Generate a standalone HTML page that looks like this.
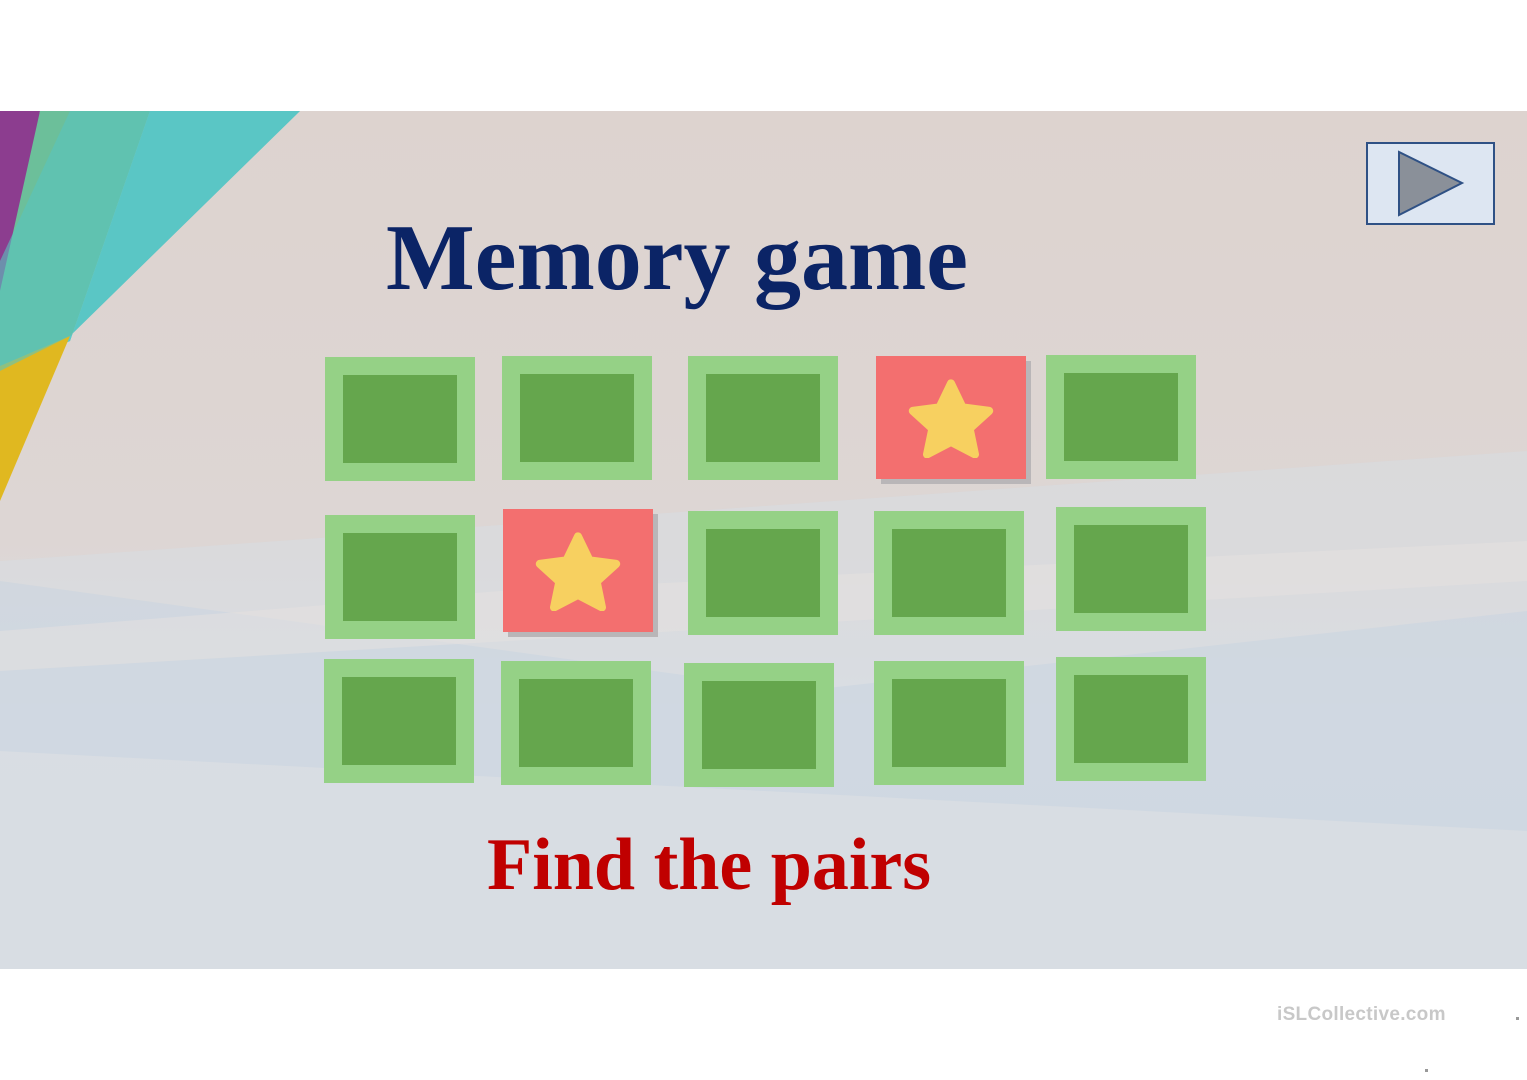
<!DOCTYPE html>
<html><head><style>
body{margin:0;width:1527px;height:1080px;background:#fff;position:relative;overflow:hidden;font-family:"Liberation Serif",serif}
.slide{position:absolute;left:0;top:111px;width:1527px;height:858px;overflow:hidden;background:linear-gradient(180deg,#ddd3cf 0%,#ddd6d4 50%,#dadde2 70%,#d8dde3 100%)}
.c{position:absolute;width:114px;height:88px;border:18px solid #95d186;background:#65a64d}
.r{position:absolute;width:150px;height:123px;background:#f36f6f;box-shadow:5px 5px 0 #b9b6b8}
.r svg{position:absolute;left:30px;top:22px}
</style></head><body>
<div class="slide">
<svg width="1527" height="858" style="position:absolute;left:0;top:0">
<polygon points="0,0 40,0 0,260" fill="#8c3d8f"/>
<polygon points="40,0 150,0 70,230 0,260 0,180" fill="#6cbf9a"/>
<polygon points="150,0 300,0 70,225 0,255 0,260 70,230" fill="#5cc8cc"/>
<polygon points="0,255 70,225 0,390" fill="#e0b820"/>
<polygon points="0,150 70,0 300,0 70,225 0,260" fill="#58c4bf" opacity="0.6"/>
<polygon points="0,450 1527,340 1527,858 0,858" fill="#d8dde3" opacity="0.5"/>
<polygon points="0,470 800,580 1527,500 1527,720 0,640" fill="#c3d2e2" opacity="0.4"/>
<polygon points="0,520 500,480 1527,430 1527,470 0,560" fill="#e6e2e0" opacity="0.5"/>
</svg>
<svg width="130" height="84" style="position:absolute;left:1366px;top:31px"><rect x="1" y="1" width="127" height="81" fill="#dde6f2" stroke="#2f5185" stroke-width="2"/><polygon points="33,10 33,73 96,41" fill="#8a9099" stroke="#2f5185" stroke-width="2"/></svg>
</div>
<div style="position:absolute;left:386px;top:204px;font-size:94px;font-weight:bold;color:#0b2466;white-space:nowrap">Memory game</div>
<div style="position:absolute;left:487px;top:823px;font-size:74px;font-weight:bold;color:#c00000;white-space:nowrap">Find the pairs</div>
<div class="c" style="left:325px;top:357px"></div>
<div class="c" style="left:502px;top:356px"></div>
<div class="c" style="left:688px;top:356px"></div>
<div class="r" style="left:876px;top:356px"><svg width="90" height="80" viewBox="0 0 100 90"><polygon points="50,6 63,33 93,37 71,57 77,86 50,72 23,86 29,57 7,37 37,33" fill="#f7d060" stroke="#f7d060" stroke-width="9" stroke-linejoin="round"/></svg></div>
<div class="c" style="left:1046px;top:355px"></div>
<div class="c" style="left:325px;top:515px"></div>
<div class="r" style="left:503px;top:509px"><svg width="90" height="80" viewBox="0 0 100 90"><polygon points="50,6 63,33 93,37 71,57 77,86 50,72 23,86 29,57 7,37 37,33" fill="#f7d060" stroke="#f7d060" stroke-width="9" stroke-linejoin="round"/></svg></div>
<div class="c" style="left:688px;top:511px"></div>
<div class="c" style="left:874px;top:511px"></div>
<div class="c" style="left:1056px;top:507px"></div>
<div class="c" style="left:324px;top:659px"></div>
<div class="c" style="left:501px;top:661px"></div>
<div class="c" style="left:684px;top:663px"></div>
<div class="c" style="left:874px;top:661px"></div>
<div class="c" style="left:1056px;top:657px"></div>
<div style="position:absolute;left:1277px;top:1004px;font-family:'Liberation Sans',sans-serif;font-weight:bold;font-size:19px;letter-spacing:0.3px;color:#c8c8c8">iSLCollective.com</div>
<div style="position:absolute;left:1516px;top:1017px;width:3px;height:3px;background:#999"></div>
<div style="position:absolute;left:1425px;top:1069px;width:3px;height:3px;background:#999"></div>
</body></html>
